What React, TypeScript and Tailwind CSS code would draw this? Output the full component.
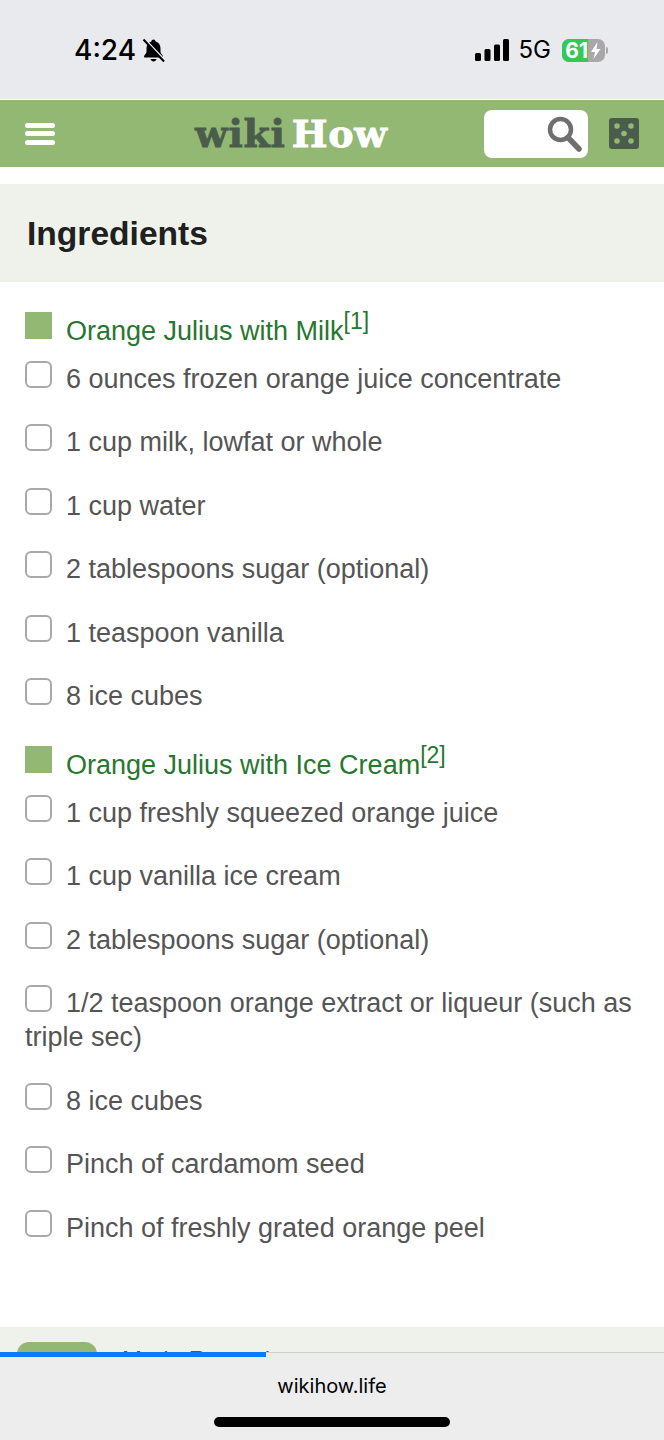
const milk = [
  "6 ounces frozen orange juice concentrate",
  "1 cup milk, lowfat or whole",
  "1 cup water",
  "2 tablespoons sugar (optional)",
  "1 teaspoon vanilla",
  "8 ice cubes",
];
const cream = [
  "1 cup freshly squeezed orange juice",
  "1 cup vanilla ice cream",
  "2 tablespoons sugar (optional)",
  "1/2 teaspoon orange extract or liqueur (such as triple sec)",
  "8 ice cubes",
  "Pinch of cardamom seed",
  "Pinch of freshly grated orange peel",
];

function Heading({ title, note }: { title: string; note: string }) {
  return (
    <div className="flex h-[49px] items-start gap-[14px]">
      <span className="h-[27px] w-[27px] shrink-0 bg-[#93b874]" />
      <span className="mt-[1px] whitespace-nowrap text-[27px] leading-[36px] text-[#28762f]">
        {title}
        <sup className="relative top-[-11px] align-baseline text-[23px] leading-none">[{note}]</sup>
      </span>
    </div>
  );
}

function Item({ text }: { text: string }) {
  return (
    <li className="pb-[28.5px] pt-[1.5px] text-[27px] leading-[33.6px] text-[#555555]">
      <span className="mr-[14px] mt-[-2px] inline-block h-[27px] w-[27px] rounded-[6px] border-2 border-[#a9a9a9] bg-white align-top" />
      {text}
    </li>
  );
}

function StatusBar() {
  return (
    <div className="flex h-[99px] items-center justify-between bg-[#e9eaee] pl-[74px] pr-[56px] pt-[1px] text-black">
      <div className="flex items-center gap-[5px]">
        <span className="text-[28px] font-medium leading-none font-['Inter',sans-serif]">4:24</span>
        <svg width="25" height="25" viewBox="0 0 25 25">
          <path d="M12.5 1.5c1.2 0 2 .8 2.1 1.9 3.2.9 4.9 3.6 4.9 7v3.4c0 1.6 1.9 3 2.4 4.4.2.8-.3 1.3-1 1.3H4.1c-.7 0-1.2-.5-1-1.3.5-1.4 2.4-2.8 2.4-4.4v-3.4c0-3.4 1.7-6.1 4.9-7 .1-1.1.9-1.9 2.1-1.9Z" fill="#000" />
          <path d="M9.5 21h6c-.3 1.5-1.5 2.5-3 2.5s-2.7-1-3-2.5Z" fill="#000" />
          <path d="M4 1.5 23.5 22" stroke="#e9eaee" strokeWidth="2" />
          <path d="M2.5 1.5 23 23.5" stroke="#000" strokeWidth="2" />
        </svg>
      </div>
      <div className="flex items-center">
        <svg className="mr-[10px]" width="34" height="22" viewBox="0 0 34 22" fill="#000">
          <rect x="0" y="14" width="6" height="8" rx="1.5" />
          <rect x="9.5" y="10" width="6" height="12" rx="1.5" />
          <rect x="19" y="5.5" width="6" height="16.5" rx="1.5" />
          <rect x="28" y="0" width="6" height="22" rx="1.5" />
        </svg>
        <span className="mr-[11px] text-[24px] leading-none font-['Inter',sans-serif]">5G</span>
        <div className="flex items-center gap-[1px]">
          <div className="flex h-[23px] w-[43px] overflow-hidden rounded-[7px] bg-[#a8a8ab]">
            <div className="flex w-[26px] items-center justify-end bg-[#34c759]">
              <span className="text-[21px] font-bold leading-none text-white font-['Inter',sans-serif]">61</span>
            </div>
            <svg width="17" height="23" viewBox="0 0 17 23" fill="#fff">
              <path d="M9.5 3 3 13h4l-1.5 7L12.5 10h-4L9.5 3Z" />
            </svg>
          </div>
          <span className="h-[7px] w-[2px] rounded-r-full bg-[#a8a8ab]" />
        </div>
      </div>
    </div>
  );
}

function Header() {
  return (
    <div className="mt-[1px] flex h-[67px] items-center bg-[#93b874] pl-[25px] pr-[25px]">
      <div className="flex w-[30px] flex-col gap-[3.5px]">
        <span className="h-[5px] rounded-full bg-white" />
        <span className="h-[5px] rounded-full bg-white" />
        <span className="h-[5px] rounded-full bg-white" />
      </div>
      <div className="ml-[140px] flex gap-[6px] whitespace-nowrap text-[38px] font-bold leading-none tracking-[0.7px] font-['DejaVu_Serif',serif]">
        <span className="text-[#4a5c4a] [-webkit-text-stroke:0.8px_#4a5c4a]">wiki</span>
        <span className="text-white [-webkit-text-stroke:0.8px_#ffffff]">How</span>
      </div>
      <div className="ml-auto flex h-[48px] w-[104px] items-center justify-end rounded-[8px] bg-white pr-[6px]">
        <svg width="35" height="36" viewBox="0 0 35 36" fill="none" stroke="#6f6f6f">
          <circle cx="13.5" cy="13.5" r="10.5" strokeWidth="4.5" />
          <path d="M21 21.5 32 33" strokeWidth="5.5" strokeLinecap="round" />
        </svg>
      </div>
      <svg className="ml-[21px]" width="30" height="31" viewBox="0 0 30 31">
        <rect width="30" height="31" rx="3" fill="#4a5c4a" />
        <g fill="#93b874">
          <circle cx="8" cy="8" r="2.8" />
          <circle cx="22" cy="8" r="2.8" />
          <circle cx="15" cy="15.5" r="2.8" />
          <circle cx="8" cy="23" r="2.8" />
          <circle cx="22" cy="23" r="2.8" />
        </g>
      </svg>
    </div>
  );
}

function BottomBar() {
  return (
    <div className="absolute bottom-0 left-0 right-0 h-[88px] border-t border-[#cfcfcf] bg-[#ededee]">
      <div className="absolute left-0 top-[-1px] h-[5px] w-[266px] bg-[#0a7aff]" />
      <div className="pt-[18px] text-center text-[20px] leading-[30px] text-black font-['Inter',sans-serif]">wikihow.life</div>
      <div className="mx-auto mt-[16px] h-[10px] w-[236px] rounded-full bg-black" />
    </div>
  );
}

export default function App() {
  return (
    <div className="relative h-[1440px] w-[664px] overflow-hidden bg-white font-['Liberation_Sans',Arial,sans-serif]">
      <StatusBar />
      <Header />
      <div className="mt-[17px] flex h-[98px] items-center bg-[#eff2ea] px-[27px] pt-[2px]">
        <h2 className="text-[33.6px] font-bold leading-none text-[#202020]">Ingredients</h2>
      </div>
      <div className="px-[25px] pt-[30px]">
        <Heading title="Orange Julius with Milk" note="1" />
        <ul>
          {milk.map((t, i) => (
            <Item key={i} text={t} />
          ))}
        </ul>
        <div className="mt-[3.5px]">
          <Heading title="Orange Julius with Ice Cream" note="2" />
        </div>
        <ul>
          {cream.map((t, i) => (
            <Item key={i} text={t} />
          ))}
        </ul>
      </div>
      <div className="absolute left-0 right-0 top-[1327px] flex h-[60px] items-start gap-[25px] bg-[#eff2ea] pl-[17px] pt-[15px]">
        <div className="h-[40px] w-[80px] rounded-t-[12px] bg-[#93b874]" />
        <span className="mt-[6px] text-[24px] leading-none text-[#545454]">Made Recently</span>
      </div>
      <BottomBar />
    </div>
  );
}
